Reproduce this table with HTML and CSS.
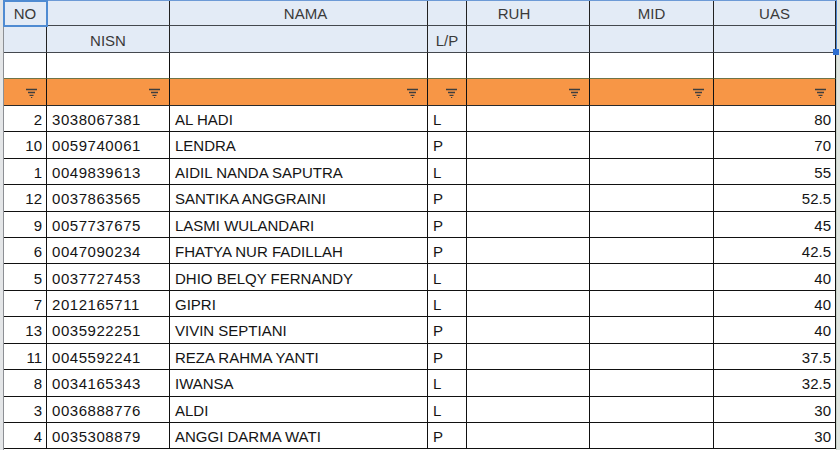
FILE: index.html
```html
<!DOCTYPE html>
<html>
<head>
<meta charset="utf-8">
<link rel="stylesheet" href="styles.css">
</head>
<body>
<div class="frame">
  <div class="strip-left"></div>
  <div class="sheet">
    <div class="grid">
      <div class="c h center">NO</div>
      <div class="c h"></div>
      <div class="c h center nama">NAMA</div>
      <div class="c h"></div>
      <div class="c h center ruh">RUH</div>
      <div class="c h center">MID</div>
      <div class="c h center">UAS</div>

      <div class="c h"></div>
      <div class="c h center">NISN</div>
      <div class="c h"></div>
      <div class="c h center">L/P</div>
      <div class="c h"></div>
      <div class="c h"></div>
      <div class="c h"></div>

      <div class="c e"></div><div class="c e"></div><div class="c e"></div><div class="c e"></div><div class="c e"></div><div class="c e"></div><div class="c e"></div>

      <div class="c f"><svg class="fi" viewBox="0 0 11 10"><path d="M0 1.5h11M2 4.5h7M3.5 7.3h4" stroke="#3e3e3e" stroke-width="1.3"/><rect x="5" y="9" width="1.2" height="1" fill="#3e3e3e"/></svg></div>
      <div class="c f"><svg class="fi" viewBox="0 0 11 10"><path d="M0 1.5h11M2 4.5h7M3.5 7.3h4" stroke="#3e3e3e" stroke-width="1.3"/><rect x="5" y="9" width="1.2" height="1" fill="#3e3e3e"/></svg></div>
      <div class="c f"><svg class="fi" viewBox="0 0 11 10"><path d="M0 1.5h11M2 4.5h7M3.5 7.3h4" stroke="#3e3e3e" stroke-width="1.3"/><rect x="5" y="9" width="1.2" height="1" fill="#3e3e3e"/></svg></div>
      <div class="c f"><svg class="fi" viewBox="0 0 11 10"><path d="M0 1.5h11M2 4.5h7M3.5 7.3h4" stroke="#3e3e3e" stroke-width="1.3"/><rect x="5" y="9" width="1.2" height="1" fill="#3e3e3e"/></svg></div>
      <div class="c f"><svg class="fi" viewBox="0 0 11 10"><path d="M0 1.5h11M2 4.5h7M3.5 7.3h4" stroke="#3e3e3e" stroke-width="1.3"/><rect x="5" y="9" width="1.2" height="1" fill="#3e3e3e"/></svg></div>
      <div class="c f"><svg class="fi" viewBox="0 0 11 10"><path d="M0 1.5h11M2 4.5h7M3.5 7.3h4" stroke="#3e3e3e" stroke-width="1.3"/><rect x="5" y="9" width="1.2" height="1" fill="#3e3e3e"/></svg></div>
      <div class="c f"><svg class="fi" viewBox="0 0 11 10"><path d="M0 1.5h11M2 4.5h7M3.5 7.3h4" stroke="#3e3e3e" stroke-width="1.3"/><rect x="5" y="9" width="1.2" height="1" fill="#3e3e3e"/></svg></div>

      <div class="c d r">2</div><div class="c d num">3038067381</div><div class="c d">AL HADI</div><div class="c d">L</div><div class="c d"></div><div class="c d"></div><div class="c d r">80</div>
      <div class="c d r">10</div><div class="c d num">0059740061</div><div class="c d">LENDRA</div><div class="c d">P</div><div class="c d"></div><div class="c d"></div><div class="c d r">70</div>
      <div class="c d r">1</div><div class="c d num">0049839613</div><div class="c d">AIDIL NANDA SAPUTRA</div><div class="c d">L</div><div class="c d"></div><div class="c d"></div><div class="c d r">55</div>
      <div class="c d r">12</div><div class="c d num">0037863565</div><div class="c d">SANTIKA ANGGRAINI</div><div class="c d">P</div><div class="c d"></div><div class="c d"></div><div class="c d r">52.5</div>
      <div class="c d r">9</div><div class="c d num">0057737675</div><div class="c d">LASMI WULANDARI</div><div class="c d">P</div><div class="c d"></div><div class="c d"></div><div class="c d r">45</div>
      <div class="c d r">6</div><div class="c d num">0047090234</div><div class="c d">FHATYA NUR FADILLAH</div><div class="c d">P</div><div class="c d"></div><div class="c d"></div><div class="c d r">42.5</div>
      <div class="c d r">5</div><div class="c d num">0037727453</div><div class="c d">DHIO BELQY FERNANDY</div><div class="c d">L</div><div class="c d"></div><div class="c d"></div><div class="c d r">40</div>
      <div class="c d r">7</div><div class="c d num">2012165711</div><div class="c d">GIPRI</div><div class="c d">L</div><div class="c d"></div><div class="c d"></div><div class="c d r">40</div>
      <div class="c d r">13</div><div class="c d num">0035922251</div><div class="c d">VIVIN SEPTIANI</div><div class="c d">P</div><div class="c d"></div><div class="c d"></div><div class="c d r">40</div>
      <div class="c d r">11</div><div class="c d num">0045592241</div><div class="c d">REZA RAHMA YANTI</div><div class="c d">P</div><div class="c d"></div><div class="c d"></div><div class="c d r">37.5</div>
      <div class="c d r">8</div><div class="c d num">0034165343</div><div class="c d">IWANSA</div><div class="c d">L</div><div class="c d"></div><div class="c d"></div><div class="c d r">32.5</div>
      <div class="c d r">3</div><div class="c d num">0036888776</div><div class="c d">ALDI</div><div class="c d">L</div><div class="c d"></div><div class="c d"></div><div class="c d r">30</div>
      <div class="c d r">4</div><div class="c d num">0035308879</div><div class="c d">ANGGI DARMA WATI</div><div class="c d">P</div><div class="c d"></div><div class="c d"></div><div class="c d r">30</div>
    </div>
    <div class="sel-range"></div>
    <div class="sel-active"></div>
    <div class="handle"></div>
  </div>
  <div class="strip-right"></div>
</div>
</body>
</html>
```
FILE: styles.css
```css
html, body {
  margin: 0;
  padding: 0;
  background: #ffffff;
}
body {
  width: 840px;
  height: 450px;
  overflow: hidden;
  font-family: "Liberation Sans", Arial, sans-serif;
  font-size: 15px;
  color: #141414;
}
.frame {
  display: flex;
  height: 450px;
}
.strip-left {
  width: 3px;
  background: #e4e6e8;
  flex: none;
}
.strip-right {
  width: 4px;
  flex: none;
  background: #dfe5e0;
  border-left: 1px solid #c6d2c8;
  box-sizing: border-box;
}
.sheet {
  position: relative;
  flex: none;
  width: 833px;
  height: 450px;
  z-index: 1;
}
.grid {
  display: grid;
  grid-template-columns: 43px 123px 258px 39px 123px 124px 122px;
  grid-auto-rows: 26.45px;
  border-left: 1px solid #8c8f94;
  height: 450px;
  overflow: hidden;
}
.c {
  box-sizing: border-box;
  border-right: 1px solid #111;
  border-bottom: 1px solid #111;
  display: flex;
  align-items: center;
  white-space: nowrap;
  overflow: hidden;
  padding: 2px 4px 0 5px;
  line-height: 1;
}
.h {
  background: #e3ebf6;
  color: #3a3a3a;
  border-bottom-color: #44484e;
  border-right-color: #222;
}
.center { justify-content: center; padding-left: 0; padding-right: 0; }
.nama { padding-left: 14px; }
.ruh { padding-right: 28px; }
.e {
  background: #ffffff;
  border-bottom-color: #6f7448;
}
.f {
  background: #f79646;
  justify-content: flex-end;
  padding-right: 9px;
  border-bottom-color: #2a2a2a;
}
.fi {
  width: 11px;
  height: 10px;
  display: block;
}
.d {
  background: #ffffff;
}
.r {
  justify-content: flex-end;
  padding-right: 4px;
}
.num {
  letter-spacing: 0.55px;
}
.sel-range {
  position: absolute;
  left: 0;
  top: 0;
  width: 834px;
  height: 53px;
  box-sizing: border-box;
  border-top: 1px solid #6d9ad6;
  border-right: 1px solid #4d86d0;
  pointer-events: none;
}
.sel-active {
  position: absolute;
  left: 0;
  top: 0;
  width: 45px;
  height: 27px;
  box-sizing: border-box;
  border: 2px solid #4f8bd2;
}
.handle {
  position: absolute;
  left: 830px;
  top: 49px;
  width: 6px;
  height: 6px;
  background: #2f6fd0;
}
```
